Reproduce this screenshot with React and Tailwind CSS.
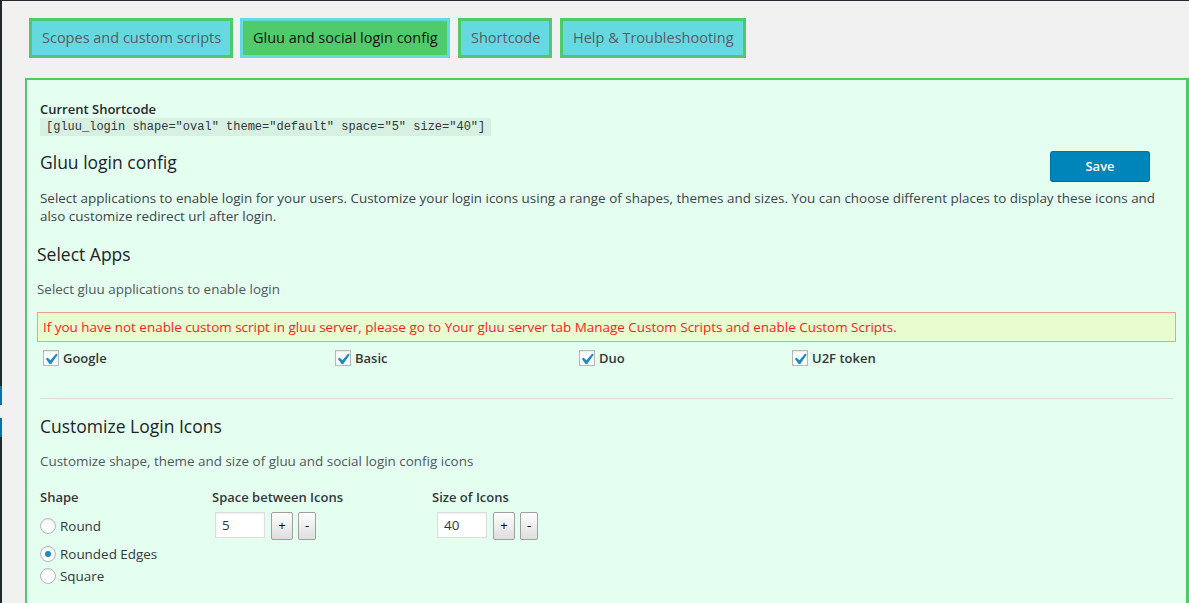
import React from "react";

const font = { fontFamily: '"Open Sans", "Liberation Sans", sans-serif' };

function Check() {
  return (
    <span className="relative flex h-[16px] w-[16px] items-center justify-center border border-[#b4b9be] bg-white shadow-[inset_0_1px_2px_rgba(0,0,0,0.1)]">
      <svg width="20" height="20" viewBox="0 0 20 20" className="absolute -left-[3px] -top-[3px]">
        <path d="M15.2 5.6l1.5 1.1-6.4 9.2H8.6L4.9 11.1l1.6-1.5 2.9 2.7z" fill="#1e8cbe" />
      </svg>
    </span>
  );
}

function Radio({ on }) {
  return (
    <span className="flex h-[16px] w-[16px] items-center justify-center rounded-full border border-[#b4b9be] bg-white shadow-[inset_0_1px_2px_rgba(0,0,0,0.1)]">
      {on && <span className="h-[6px] w-[6px] rounded-full bg-[#1e8cbe]" />}
    </span>
  );
}

function Stepper({ value, first }) {
  return (
    <div className="mt-[6px] flex items-start">
      <div
        className={
          (first ? "ml-[3px] " : "ml-[5px] ") +
          "flex h-[26px] w-[50px] items-center border border-[#ddd] bg-white pl-[6px] text-[13.45px] text-[#32373c] shadow-[inset_0_1px_2px_rgba(0,0,0,0.07)]"
        }
      >
        {value}
      </div>
      <div className="ml-[6px] flex h-[28px] w-[22px] items-center justify-center rounded-[2px] border border-[#a0a0a0] bg-gradient-to-b from-[#fefefe] to-[#dedede] text-[13px] text-black">
        +
      </div>
      <div className="ml-[5px] flex h-[28px] w-[18px] items-center justify-center rounded-[2px] border border-[#a0a0a0] bg-gradient-to-b from-[#fefefe] to-[#dedede] text-[13px] text-black">
        -
      </div>
    </div>
  );
}

export default function App() {
  const tabs = [
    { t: "Scopes and custom scripts", active: false, m: "w-[204px]" },
    { t: "Gluu and social login config", active: true, m: "ml-[7px] w-[210px]" },
    { t: "Shortcode", active: false, m: "ml-[8px] w-[94px]" },
    { t: "Help & Troubleshooting", active: false, m: "ml-[8px] w-[186px]" },
  ];
  const apps = [
    { n: "Google", w: "w-[292px]" },
    { n: "Basic", w: "w-[244px]" },
    { n: "Duo", w: "w-[213px]" },
    { n: "U2F token", w: "w-[200px]" },
  ];
  return (
    <div className="flex h-[603px] w-full flex-col overflow-hidden bg-[#f1f1f1]" style={font}>
      <div className="h-px w-full shrink-0 bg-[#23282d]" />
      <div className="flex min-h-0 flex-1">
        <div className="flex w-[2px] shrink-0 flex-col">
          <div className="h-[385px] bg-[#23282d]" />
          <div className="h-[19px] bg-[#0073aa]" />
          <div className="h-[13px] bg-[#f1f1f1]" />
          <div className="h-[19px] bg-[#0073aa]" />
          <div className="flex-1 bg-[#23282d]" />
        </div>
        <div className="flex min-w-0 flex-1 flex-col pl-[23px]">
          <div className="ml-[4px] mt-[17px] flex shrink-0">
            {tabs.map((tab) => (
              <div
                key={tab.t}
                className={
                  (tab.active
                    ? "flex h-[40px] shrink-0 items-center whitespace-nowrap border-[3px] border-[#66d9e0] bg-[#4fcb6b] px-[10px] text-[14.5px] text-[#111] "
                    : "flex h-[40px] shrink-0 items-center whitespace-nowrap border-[3px] border-[#50c96b] bg-[#66d9e0] px-[10px] text-[14.5px] text-[#555d66] ") + tab.m
                }
              >
                {tab.t}
              </div>
            ))}
          </div>

          <div className="mt-[20px] h-[600px] shrink-0 border-[2px] border-r-[3px] border-[#50c96b] bg-[#e4fff0] px-[13px] pt-[20px]">
            <div className="text-[13px] font-semibold leading-[18px] text-[#23282d]">Current Shortcode</div>
            <div className="w-fit bg-black/[0.06] px-[6px] text-[12px] leading-[18px] text-[#32373c]" style={{ fontFamily: '"Liberation Mono", monospace' }}>
              [gluu_login shape="oval" theme="default" space="5" size="40"]
            </div>

            <div className="mt-[14px] flex items-start justify-between">
              <div className="text-[17.5px] font-medium leading-[24px] text-[#1d2327]">Gluu login config</div>
              <div className="mr-[23px] mt-[1px] flex h-[31px] w-[100px] items-center justify-center rounded-[3px] border border-[#0073aa] border-b-[#006799] bg-[#0085ba] text-[13px] font-semibold text-white">
                Save
              </div>
            </div>

            <p className="mt-[7px] text-[13.45px] leading-[18px] text-[#3c434a]">
              Select applications to enable login for your users. Customize your login icons using a range of shapes, themes and sizes. You can choose different places to display these icons and
              <br />
              also customize redirect url after login.
            </p>

            <div className="-ml-[3px] mt-[17px] text-[17.5px] font-medium leading-[24px] text-[#1d2327]">Select Apps</div>
            <div className="-ml-[3px] mt-[14px] text-[13.45px] leading-[18px] text-[#50575e]">Select gluu applications to enable login</div>

            <div className="-mx-[3px] mt-[14px] h-[30px] border border-[#f0a08a] bg-[#e9fcd0] pl-[5px] text-[13.45px] leading-[28px] text-[#ff1a1a]">
              If you have not enable custom script in gluu server, please go to Your gluu server tab Manage Custom Scripts and enable Custom Scripts.
            </div>

            <div className="ml-[3px] mt-[7px] flex">
              {apps.map((a) => (
                <div key={a.n} className={"flex h-[18px] items-center gap-[4px] " + a.w}>
                  <Check />
                  <span className="text-[13px] font-semibold leading-[18px] text-[#32373c]">{a.n}</span>
                </div>
              ))}
            </div>

            <div className="mt-[31px] h-px bg-[#dcdcdc]" />

            <div className="mt-[15px] text-[17.5px] font-medium leading-[24px] text-[#1d2327]">Customize Login Icons</div>
            <div className="mt-[14px] text-[13.45px] leading-[18px] text-[#50575e]">Customize shape, theme and size of gluu and social login config icons</div>

            <div className="mt-[18px] flex">
              <div className="w-[172px]">
                <div className="text-[13px] font-semibold leading-[18px] text-[#32373c]">Shape</div>
                <div className="mt-[11px] flex h-[18px] items-center gap-[4px]">
                  <Radio />
                  <span className="text-[13.45px] text-[#32373c]">Round</span>
                </div>
                <div className="mt-[10px] flex h-[18px] items-center gap-[4px]">
                  <Radio on />
                  <span className="text-[13.45px] text-[#32373c]">Rounded Edges</span>
                </div>
                <div className="mt-[4px] flex h-[18px] items-center gap-[4px]">
                  <Radio />
                  <span className="text-[13.45px] text-[#32373c]">Square</span>
                </div>
              </div>
              <div className="w-[220px]">
                <div className="text-[13px] font-semibold leading-[18px] text-[#32373c]">Space between Icons</div>
                <Stepper value="5" first />
              </div>
              <div className="w-[200px]">
                <div className="text-[13px] font-semibold leading-[18px] text-[#32373c]">Size of Icons</div>
                <Stepper value="40" />
              </div>
            </div>
          </div>
        </div>
      </div>
    </div>
  );
}
